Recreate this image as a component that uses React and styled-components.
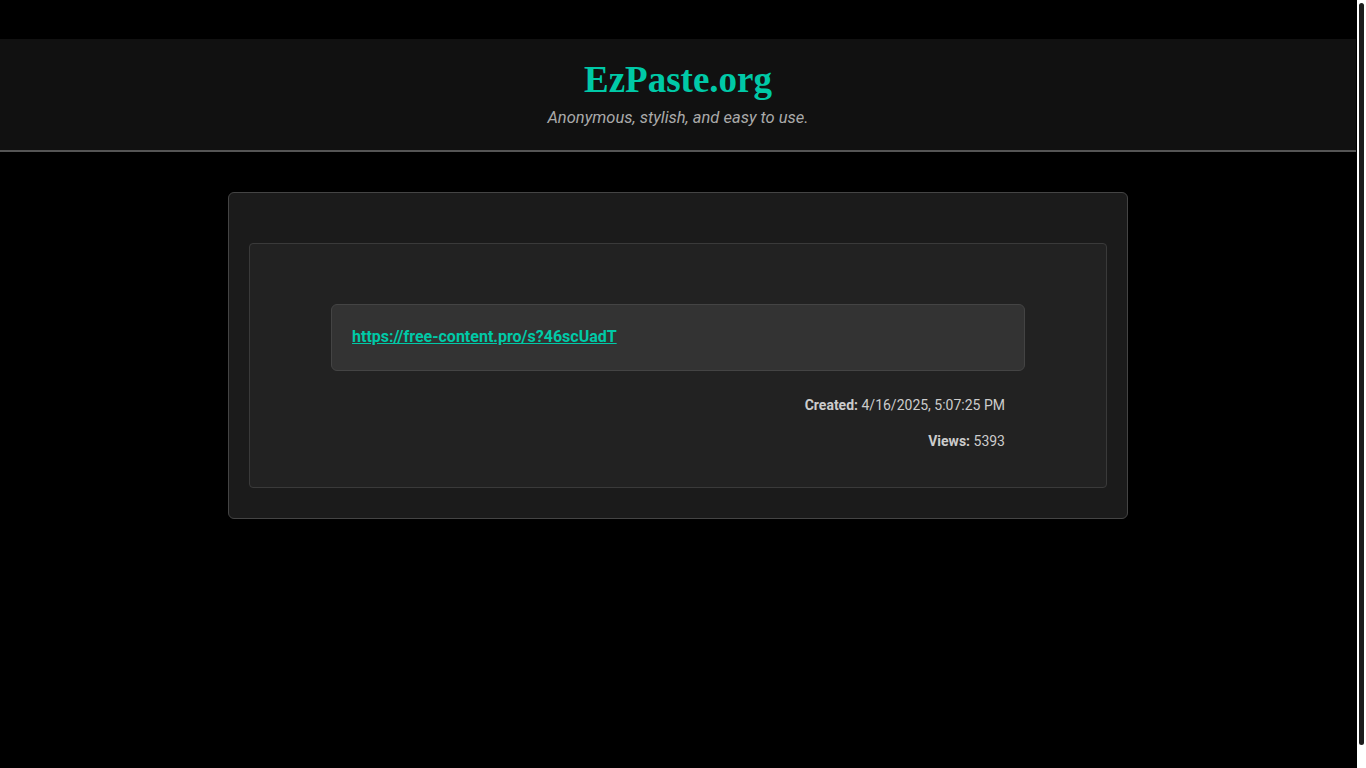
import React from "react";
import styled, { createGlobalStyle } from "styled-components";

const GlobalStyle = createGlobalStyle`
  html, body {
    margin: 0;
    height: 100%;
    overflow: hidden;
    background: #000;
  }
  body {
    font-family: Roboto, "Liberation Sans", sans-serif;
    color: #ccc;
  }
  #root {
    height: 100%;
  }
`;

const Viewport = styled.div`
  display: flex;
  height: 100vh;
  background: #000;
`;

const Page = styled.div`
  flex: 1;
  min-width: 0;
`;

/* drawn scrollbar: light track, dark thumb */
const ScrollTrack = styled.div`
  width: 10px;
  flex-shrink: 0;
  border-left: 1px solid #000;
  background: #fff;
  padding: 3px 2px 23px;
  box-sizing: border-box;
  display: flex;
`;

const ScrollThumb = styled.div`
  flex: 1;
  background: #1c1c1c;
  border-radius: 3px;
`;

const Header = styled.header`
  margin-top: 39px;
  background: #111;
  border-bottom: 2px solid #555;
  padding: 18px 20px 22px;
  text-align: center;
`;

const Title = styled.h1`
  margin: 0;
  font-family: "Liberation Serif", "DejaVu Serif", serif;
  font-size: 37px;
  font-weight: 700;
  color: #00c9a7;
  line-height: 46px;
`;

const Tagline = styled.p`
  margin: 5px 0 0;
  font-size: 16.5px;
  font-style: italic;
  color: #aaa;
  line-height: 20px;
`;

const Main = styled.main`
  display: flex;
  justify-content: center;
  padding-top: 40px;
`;

const Card = styled.section`
  width: 900px;
  box-sizing: border-box;
  background: #1b1b1b;
  border: 1px solid #444;
  border-radius: 6px;
  padding: 50px 20px 30px;
`;

const Paste = styled.div`
  background: #222;
  border: 1px solid #3a3a3a;
  border-radius: 4px;
  padding: 60px 81px 36px;
`;

const LinkBox = styled.div`
  background: #333;
  border: 1px solid #444;
  border-radius: 6px;
  padding: 20px 20px 22px;
  line-height: 23px;
`;

const PasteLink = styled.a`
  color: #00c9a7;
  font-weight: 700;
  font-size: 16px;
  text-decoration: underline;
`;

const Meta = styled.p`
  margin: ${(p) => (p.$first ? "24px" : "16px")} 0 0;
  padding-right: 20px;
  text-align: right;
  font-size: 14px;
  line-height: 20px;
  color: #ccc;

  strong {
    font-weight: 700;
  }
`;

export default function App() {
  return (
    <Viewport>
      <GlobalStyle />
      <Page>
        <Header>
          <Title>EzPaste.org</Title>
          <Tagline>Anonymous, stylish, and easy to use.</Tagline>
        </Header>
        <Main>
          <Card>
            <Paste>
              <LinkBox>
                <PasteLink href="#">https://free-content.pro/s?46scUadT</PasteLink>
              </LinkBox>
              <Meta $first>
                <strong>Created:</strong> 4/16/2025, 5:07:25 PM
              </Meta>
              <Meta>
                <strong>Views:</strong> 5393
              </Meta>
            </Paste>
          </Card>
        </Main>
      </Page>
      <ScrollTrack>
        <ScrollThumb />
      </ScrollTrack>
    </Viewport>
  );
}
